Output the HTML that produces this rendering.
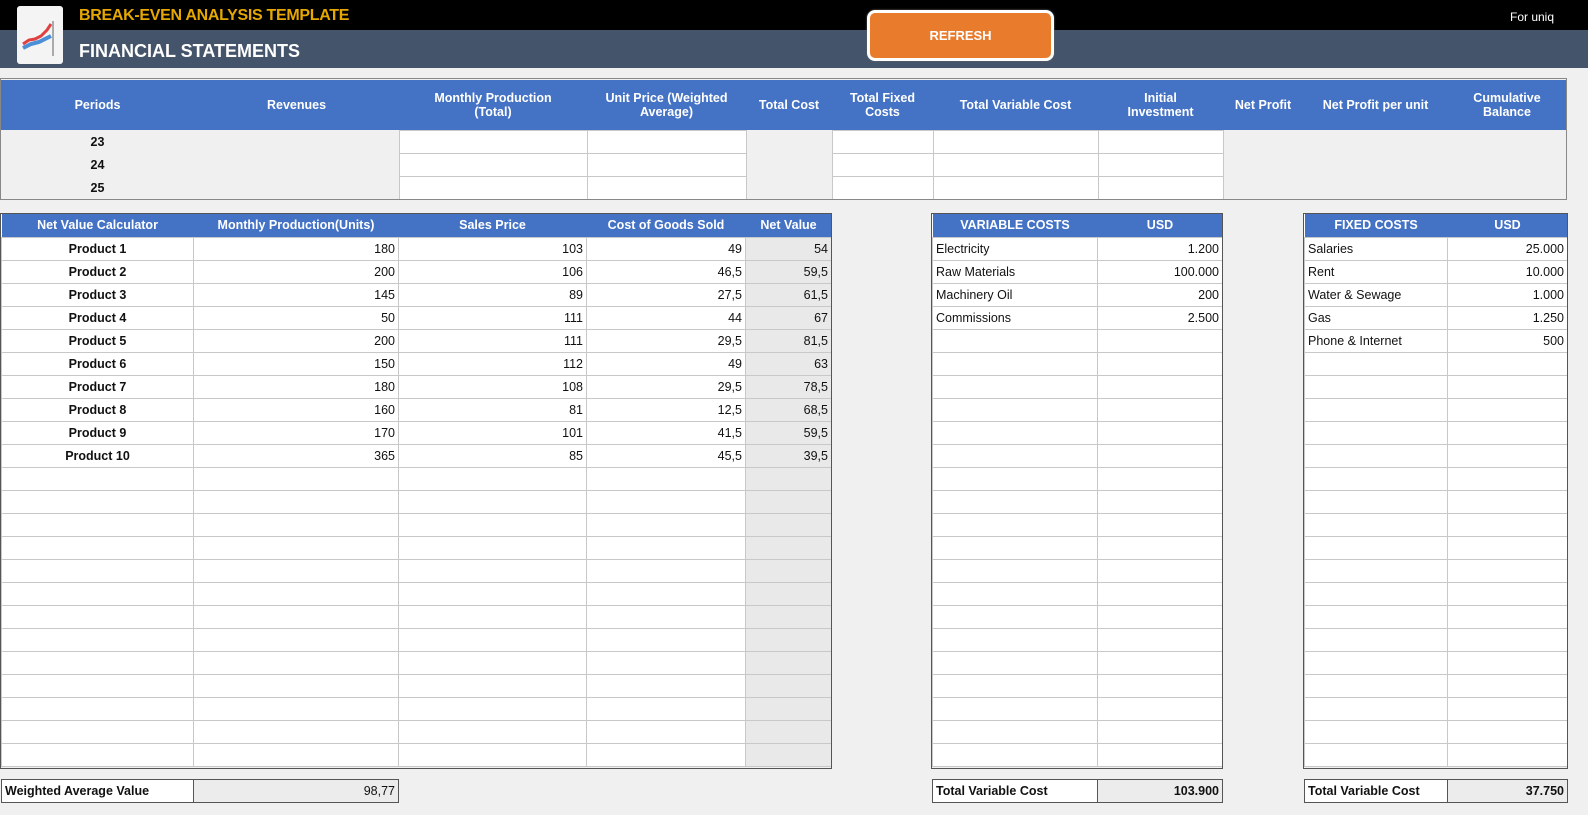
<!DOCTYPE html>
<html><head><meta charset="utf-8"><style>
*{margin:0;padding:0;box-sizing:border-box}
body{width:1588px;height:815px;background:#f0f0f0;font-family:"Liberation Sans",Arial,sans-serif;font-size:12.5px;color:#111;position:relative;overflow:hidden}
.top1{position:absolute;left:0;top:0;width:1588px;height:30px;background:#000}
.top2{position:absolute;left:0;top:30px;width:1588px;height:38px;background:#44546a}
.logo{position:absolute;left:17px;top:6px;width:46px;height:58px;background:#f4f4f4;border-radius:3px}
.t1{position:absolute;left:79px;top:7px;color:#e6a800;font-size:16px;font-weight:bold;letter-spacing:-0.3px}
.t2{position:absolute;left:79px;top:41px;color:#fff;font-size:18px;font-weight:bold}
.btn{position:absolute;left:867px;top:10px;width:187px;height:51px;border:3px solid #fff;border-radius:8px;background:#e97b2c;color:#fff;font-weight:bold;font-size:13px;text-align:center;line-height:45px;box-shadow:0 0 2px #666}
.uniq{position:absolute;left:1510px;top:10px;color:#fff;font-size:12px}
table{position:absolute;border-collapse:collapse;table-layout:fixed}
td{height:23px;border:1px solid #c8c8c8;padding:0 3px;white-space:nowrap;overflow:hidden}
.h td{background:#4472c4;color:#fff;font-weight:bold;text-align:center;border:none}
.r{text-align:right}.c{text-align:center;font-weight:bold}
.g{background:#e9e9e9}
.w{background:#fff}
.box{position:absolute;border:1px solid #555}
</style></head><body>
<div class="top1"></div><div class="top2"></div>
<div class="logo"><svg width="46" height="58"><polyline points="6,38 12,34 18,33 24,30 30,24 34,18" fill="none" stroke="#e04040" stroke-width="3"/><polyline points="6,42 14,38 22,36 30,32 34,30" fill="none" stroke="#4a8fd8" stroke-width="4"/><line x1="36" y1="15" x2="36" y2="50" stroke="#aaa" stroke-width="2"/></svg></div>
<div class="t1">BREAK-EVEN ANALYSIS TEMPLATE</div>
<div class="t2">FINANCIAL STATEMENTS</div>
<div class="btn">REFRESH</div>
<div class="uniq">For uniq</div>

<table style="left:1px;top:80px;width:1565px">
<colgroup><col style="width:193px"><col style="width:205px"><col style="width:188px"><col style="width:159px"><col style="width:86px"><col style="width:101px"><col style="width:165px"><col style="width:125px"><col style="width:80px"><col style="width:145px"><col style="width:118px"></colgroup>
<tr class="h"><td style="height:50px;line-height:23px">Periods</td><td>Revenues</td><td>Monthly Production<br>(Total)</td><td>Unit Price (Weighted<br>Average)</td><td>Total Cost</td><td>Total Fixed<br>Costs</td><td>Total Variable Cost</td><td>Initial<br>Investment</td><td>Net Profit</td><td>Net Profit per unit</td><td>Cumulative<br>Balance</td></tr>
<tr><td class="c" style="border:none">23</td><td style="border:none"></td><td class="w"></td><td class="w"></td><td style="border:none;border-left:1px solid #999"></td><td class="w"></td><td class="w"></td><td class="w"></td><td style="border:none"></td><td style="border:none"></td><td style="border:none"></td></tr>
<tr><td class="c" style="border:none">24</td><td style="border:none"></td><td class="w"></td><td class="w"></td><td style="border:none;border-left:1px solid #999"></td><td class="w"></td><td class="w"></td><td class="w"></td><td style="border:none"></td><td style="border:none"></td><td style="border:none"></td></tr>
<tr><td class="c" style="border:none">25</td><td style="border:none"></td><td class="w"></td><td class="w"></td><td style="border:none;border-left:1px solid #999"></td><td class="w"></td><td class="w"></td><td class="w"></td><td style="border:none"></td><td style="border:none"></td><td style="border:none"></td></tr>
</table>
<div class="box" style="left:0;top:78px;width:1567px;height:122px;border-color:#888"></div>

<table style="left:1px;top:214px;width:830px;background:#fff">
<colgroup><col style="width:192px"><col style="width:205px"><col style="width:188px"><col style="width:159px"><col style="width:86px"></colgroup>
<tr class="h"><td>Net Value Calculator</td><td>Monthly Production(Units)</td><td>Sales Price</td><td>Cost of Goods Sold</td><td>Net Value</td></tr>
<tr><td class="c">Product 1</td><td class="r">180</td><td class="r">103</td><td class="r">49</td><td class="r g">54</td></tr>
<tr><td class="c">Product 2</td><td class="r">200</td><td class="r">106</td><td class="r">46,5</td><td class="r g">59,5</td></tr>
<tr><td class="c">Product 3</td><td class="r">145</td><td class="r">89</td><td class="r">27,5</td><td class="r g">61,5</td></tr>
<tr><td class="c">Product 4</td><td class="r">50</td><td class="r">111</td><td class="r">44</td><td class="r g">67</td></tr>
<tr><td class="c">Product 5</td><td class="r">200</td><td class="r">111</td><td class="r">29,5</td><td class="r g">81,5</td></tr>
<tr><td class="c">Product 6</td><td class="r">150</td><td class="r">112</td><td class="r">49</td><td class="r g">63</td></tr>
<tr><td class="c">Product 7</td><td class="r">180</td><td class="r">108</td><td class="r">29,5</td><td class="r g">78,5</td></tr>
<tr><td class="c">Product 8</td><td class="r">160</td><td class="r">81</td><td class="r">12,5</td><td class="r g">68,5</td></tr>
<tr><td class="c">Product 9</td><td class="r">170</td><td class="r">101</td><td class="r">41,5</td><td class="r g">59,5</td></tr>
<tr><td class="c">Product 10</td><td class="r">365</td><td class="r">85</td><td class="r">45,5</td><td class="r g">39,5</td></tr>
<tr><td></td><td></td><td></td><td></td><td class="g"></td></tr>
<tr><td></td><td></td><td></td><td></td><td class="g"></td></tr>
<tr><td></td><td></td><td></td><td></td><td class="g"></td></tr>
<tr><td></td><td></td><td></td><td></td><td class="g"></td></tr>
<tr><td></td><td></td><td></td><td></td><td class="g"></td></tr>
<tr><td></td><td></td><td></td><td></td><td class="g"></td></tr>
<tr><td></td><td></td><td></td><td></td><td class="g"></td></tr>
<tr><td></td><td></td><td></td><td></td><td class="g"></td></tr>
<tr><td></td><td></td><td></td><td></td><td class="g"></td></tr>
<tr><td></td><td></td><td></td><td></td><td class="g"></td></tr>
<tr><td></td><td></td><td></td><td></td><td class="g"></td></tr>
<tr><td></td><td></td><td></td><td></td><td class="g"></td></tr>
<tr><td></td><td></td><td></td><td></td><td class="g"></td></tr>
</table>
<div class="box" style="left:0;top:213px;width:832px;height:556px"></div>

<table style="left:932px;top:214px;width:290px;background:#fff">
<colgroup><col style="width:165px"><col style="width:125px"></colgroup>
<tr class="h"><td>VARIABLE COSTS</td><td>USD</td></tr>
<tr><td>Electricity</td><td class="r">1.200</td></tr>
<tr><td>Raw Materials</td><td class="r">100.000</td></tr>
<tr><td>Machinery Oil</td><td class="r">200</td></tr>
<tr><td>Commissions</td><td class="r">2.500</td></tr>
<tr><td></td><td></td></tr><tr><td></td><td></td></tr><tr><td></td><td></td></tr><tr><td></td><td></td></tr><tr><td></td><td></td></tr><tr><td></td><td></td></tr><tr><td></td><td></td></tr><tr><td></td><td></td></tr><tr><td></td><td></td></tr><tr><td></td><td></td></tr><tr><td></td><td></td></tr><tr><td></td><td></td></tr><tr><td></td><td></td></tr><tr><td></td><td></td></tr><tr><td></td><td></td></tr><tr><td></td><td></td></tr><tr><td></td><td></td></tr><tr><td></td><td></td></tr><tr><td></td><td></td></tr>
</table>
<div class="box" style="left:931px;top:213px;width:292px;height:556px"></div>

<table style="left:1304px;top:214px;width:263px;background:#fff">
<colgroup><col style="width:143px"><col style="width:120px"></colgroup>
<tr class="h"><td>FIXED COSTS</td><td>USD</td></tr>
<tr><td>Salaries</td><td class="r">25.000</td></tr>
<tr><td>Rent</td><td class="r">10.000</td></tr>
<tr><td>Water &amp; Sewage</td><td class="r">1.000</td></tr>
<tr><td>Gas</td><td class="r">1.250</td></tr>
<tr><td>Phone &amp; Internet</td><td class="r">500</td></tr>
<tr><td></td><td></td></tr><tr><td></td><td></td></tr><tr><td></td><td></td></tr><tr><td></td><td></td></tr><tr><td></td><td></td></tr><tr><td></td><td></td></tr><tr><td></td><td></td></tr><tr><td></td><td></td></tr><tr><td></td><td></td></tr><tr><td></td><td></td></tr><tr><td></td><td></td></tr><tr><td></td><td></td></tr><tr><td></td><td></td></tr><tr><td></td><td></td></tr><tr><td></td><td></td></tr><tr><td></td><td></td></tr><tr><td></td><td></td></tr><tr><td></td><td></td></tr>
</table>
<div class="box" style="left:1303px;top:213px;width:265px;height:556px"></div>

<table style="left:1px;top:779px;width:397px">
<colgroup><col style="width:192px"><col style="width:205px"></colgroup>
<tr><td style="border:1px solid #555;font-weight:bold;background:#fff">Weighted Average Value</td><td class="r" style="border:1px solid #555;background:#ececec">98,77</td></tr></table>
<table style="left:932px;top:779px;width:290px">
<colgroup><col style="width:165px"><col style="width:125px"></colgroup>
<tr><td style="border:1px solid #555;font-weight:bold;background:#fff">Total Variable Cost</td><td class="r" style="border:1px solid #555;background:#ececec;font-weight:bold">103.900</td></tr></table>
<table style="left:1304px;top:779px;width:263px">
<colgroup><col style="width:143px"><col style="width:120px"></colgroup>
<tr><td style="border:1px solid #555;font-weight:bold;background:#fff">Total Variable Cost</td><td class="r" style="border:1px solid #555;background:#ececec;font-weight:bold">37.750</td></tr></table>
</body></html>
